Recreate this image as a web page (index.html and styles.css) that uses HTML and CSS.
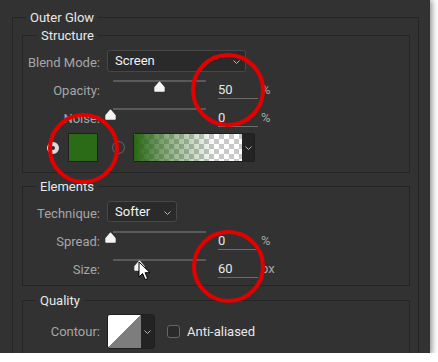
FILE: index.html
```html
<!DOCTYPE html>
<html lang="en">
<head>
  <meta charset="UTF-8" />
  <title>Outer Glow</title>
  <link rel="stylesheet" href="styles.css">
</head>
<body>

<div class="panel">
  <fieldset class="group outer">
    <legend>Outer Glow</legend>

    <fieldset class="group structure">
      <legend>Structure</legend>
      <div class="row select-row">
        <span class="lbl">Blend Mode:</span>
        <div class="select select-wide">Screen
          <svg class="chev" viewBox="0 0 7 4"><path d="M0.5 0.5 L3.5 3.5 L6.5 0.5"/></svg>
        </div>
      </div>
      <div class="row slider-row">
        <span class="lbl">Opacity:</span>
        <div class="slider">
          <div class="track"></div>
          <svg class="thumb" style="left: 47px" viewBox="0 0 11 11"><path d="M1 10 L1 6.5 L5.5 1.2 L10 6.5 L10 10 Z"/></svg>
        </div>
        <span class="value">50</span>
        <span class="unit">%</span>
      </div>
      <div class="row slider-row">
        <span class="lbl">Noise:</span>
        <div class="slider">
          <div class="track"></div>
          <svg class="thumb" style="left: -2px" viewBox="0 0 11 11"><path d="M1 10 L1 6.5 L5.5 1.2 L10 6.5 L10 10 Z"/></svg>
        </div>
        <span class="value">0</span>
        <span class="unit">%</span>
      </div>
      <div class="row color-row">
        <span class="radio on"></span>
        <span class="swatch"></span>
        <span class="radio"></span>
        <div class="gradient-pick">
          <span class="gradient"></span>
          <span class="drop">
            <svg class="chev" viewBox="0 0 7 4"><path d="M0.5 0.5 L3.5 3.5 L6.5 0.5"/></svg>
          </span>
        </div>
      </div>
    </fieldset>

    <fieldset class="group elements">
      <legend>Elements</legend>
      <div class="row select-row">
        <span class="lbl">Technique:</span>
        <div class="select select-short">Softer
          <svg class="chev" viewBox="0 0 7 4"><path d="M0.5 0.5 L3.5 3.5 L6.5 0.5"/></svg>
        </div>
      </div>
      <div class="row slider-row">
        <span class="lbl">Spread:</span>
        <div class="slider">
          <div class="track"></div>
          <svg class="thumb" style="left: -2px" viewBox="0 0 11 11"><path d="M1 10 L1 6.5 L5.5 1.2 L10 6.5 L10 10 Z"/></svg>
        </div>
        <span class="value">0</span>
        <span class="unit">%</span>
      </div>
      <div class="row slider-row size-row">
        <span class="lbl">Size:</span>
        <div class="slider">
          <div class="track"></div>
          <svg class="thumb" style="left: 27px" viewBox="0 0 11 11"><path d="M1 10 L1 6.5 L5.5 1.2 L10 6.5 L10 10 Z"/></svg>
        </div>
        <span class="value">60</span>
        <span class="unit">px</span>
      </div>
    </fieldset>

    <fieldset class="group quality">
      <legend>Quality</legend>
      <div class="row contour-row">
        <span class="lbl">Contour:</span>
        <div class="contour">
          <span class="curve"></span>
          <span class="drop">
            <svg class="chev" viewBox="0 0 7 4"><path d="M0.5 0.5 L3.5 3.5 L6.5 0.5"/></svg>
          </span>
        </div>
        <span class="checkbox"></span>
        <span class="check-text">Anti-aliased</span>
      </div>
    </fieldset>
  </fieldset>

  <span class="ring ring-values"></span>
  <span class="ring ring-swatch"></span>
  <span class="ring ring-size"></span>

  <svg class="cursor" viewBox="0 0 13 21"><path d="M1 1 L1 16 L4.6 12.6 L7.2 18.6 L9.6 17.6 L7.1 11.7 L12 11.7 Z"/></svg>
</div>

</body>
</html>
```

FILE: styles.css
```css
:root {
  --panel-bg: #323232;
  --line-color: #252525;
  --label-color: #a6a6a6;
  --text-color: #e8e8e8;
  --field-bg: #2a2a2a;
  --field-border: #474747;
  --ring-color: #e50000;
  --font-family: Roboto, "Liberation Sans", Arial, sans-serif;
}

*, *::before, *::after { box-sizing: border-box; }

body {
  margin: 0;
  background: #ffffff;
  font-family: var(--font-family);
  font-size: 13px;
  -webkit-font-smoothing: antialiased;
}

.panel {
  position: relative;
  width: 430px;
  height: 353px;
  padding-top: 9px;
  background: var(--panel-bg);
  overflow: hidden;
  box-shadow: 1px 1px 6px 1px rgba(0, 0, 0, 0.45);
}

/* group boxes */

.group {
  margin: 0;
  border: 1px solid var(--line-color);
  min-inline-size: 0;
}

.group legend {
  margin-left: 4px;
  padding: 0 4px;
  line-height: 17px;
  color: var(--text-color);
  white-space: nowrap;
}

.outer {
  margin: 0 11px 0 12px;
  padding: 1px 8px 20px 9px;
}

.structure,
.elements,
.quality {
  padding: 6px 8px 10px 2px;
}

.structure legend,
.elements legend,
.quality legend {
  margin-left: 12px;
}

.elements legend,
.quality legend {
  margin-left: 11px;
}

.elements {
  margin-top: 5px;
  padding-bottom: 7px;
}

.quality {
  margin-top: 6px;
  padding-top: 5px;
  padding-bottom: 20px;
}

/* rows */

.row {
  display: flex;
  align-items: flex-start;
}

.lbl {
  flex: 0 0 75px;
  margin-right: 7px;
  text-align: right;
  line-height: 17px;
  white-space: nowrap;
  color: var(--label-color);
}

.select-row .lbl { padding-top: 4px; }

.select {
  position: relative;
  height: 22px;
  padding-left: 7px;
  line-height: 20px;
  color: #f2f2f2;
  background: var(--field-bg);
  border: 1px solid var(--field-border);
  border-radius: 3px;
}

.select-wide { width: 139px; }
.select-short { width: 70px; height: 21px; line-height: 19px; }

.chev {
  width: 7px;
  height: 4px;
  fill: none;
  stroke: #b4b4b4;
  stroke-width: 1;
}

.select .chev {
  position: absolute;
  right: 5px;
  top: 9px;
}

/* sliders */

.slider-row {
  height: 19px;
  margin-top: 8px;
}

.elements .slider-row { margin-top: 9px; }
.elements .size-row { margin-top: 8px; }

.slider-row + .slider-row { margin-top: 9px; }

.slider-row .lbl { padding-top: 2px; }

.slider {
  position: relative;
  flex: 0 0 111px;
  height: 19px;
}

.track {
  margin-left: 6px;
  width: 93px;
  height: 2px;
  background: #5a5a5a;
}

.thumb {
  position: absolute;
  top: 1px;
  width: 11px;
  height: 11px;
  fill: #f4f4f4;
  stroke: #f4f4f4;
  stroke-width: 1.4;
  stroke-linejoin: round;
}

.value {
  width: 40px;
  height: 18px;
  margin-top: 1px;
  line-height: 17px;
  color: var(--text-color);
  border-bottom: 1px solid #6c6c6c;
}

.unit {
  margin: 1px 0 0 3px;
  line-height: 17px;
  color: var(--label-color);
}

/* colour row */

.color-row {
  height: 29px;
  margin-top: 6px;
  align-items: center;
}

.radio {
  width: 13px;
  height: 13px;
  margin-left: 14px;
  border: 1px solid #666666;
  border-radius: 50%;
}

.radio.on {
  width: 12px;
  height: 12px;
  margin-left: 22px;
  border: 4px solid #dcdcdc;
  background: #2e2e2e;
}

.swatch {
  width: 30px;
  height: 29px;
  margin-left: 9px;
  background: #2b6a17;
  border: 1px solid #1f1f1f;
}

.gradient-pick {
  display: flex;
  height: 29px;
  margin-left: 8px;
  border: 1px solid #1f1f1f;
  border-radius: 2px;
  overflow: hidden;
}

.gradient {
  width: 108px;
  background:
    linear-gradient(to right, rgba(40, 102, 20, 1) 0%, rgba(40, 102, 20, 0.55) 30%, rgba(40, 102, 20, 0) 75%),
    repeating-conic-gradient(#c8c8c8 0 25%, #ffffff 0 50%) 0 0 / 10px 10px;
}

.drop {
  display: flex;
  align-items: center;
  justify-content: center;
  width: 12px;
  background: #232323;
}

/* quality row */

.contour-row { align-items: center; }

.contour {
  display: flex;
  width: 48px;
  height: 35px;
  border: 1px solid #1f1f1f;
  border-radius: 3px;
  overflow: hidden;
}

.curve {
  width: 34px;
  background: linear-gradient(to bottom right, #ffffff 50%, #7d7d7d 50%);
}

.contour .drop { width: 13px; }

.checkbox {
  width: 13px;
  height: 13px;
  margin-left: 12px;
  background: #2a2a2a;
  border: 1px solid #666666;
  border-radius: 3px;
}

.check-text {
  margin-left: 7px;
  color: var(--text-color);
}

/* annotations laid over the dialog */

.ring {
  position: absolute;
  border: 4px solid var(--ring-color);
  border-radius: 50%;
}

.ring-values { left: 191px; top: 53px; width: 74px; height: 74px; }
.ring-swatch { left: 48px; top: 113px; width: 71px; height: 71px; }
.ring-size { left: 192px; top: 230px; width: 73px; height: 73px; }

.cursor {
  position: absolute;
  left: 138px;
  top: 261px;
  width: 13px;
  height: 21px;
  fill: #ffffff;
  stroke: #000000;
  stroke-width: 1;
  stroke-linejoin: round;
}
```
